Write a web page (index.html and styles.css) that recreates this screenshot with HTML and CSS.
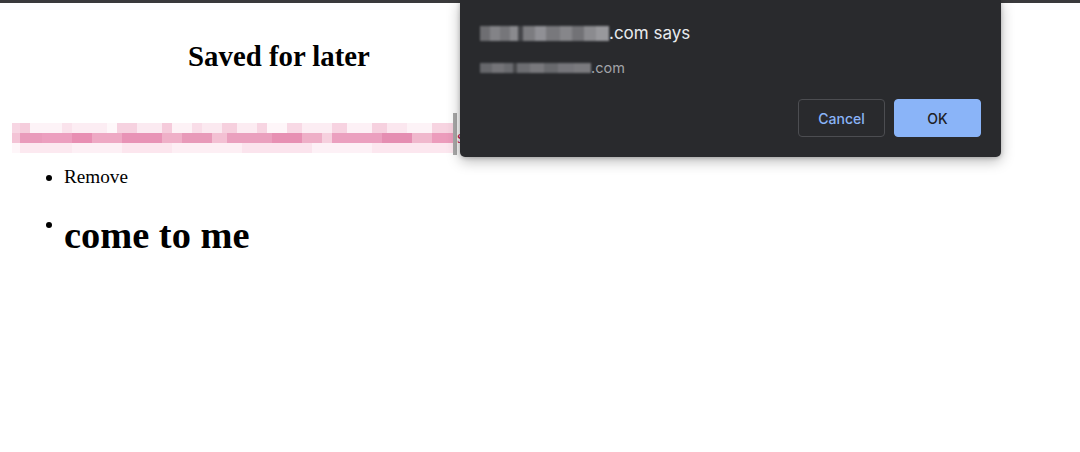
FILE: index.html
```html
<!DOCTYPE html>
<html>
<head>
<meta charset="utf-8">
<link rel="stylesheet" href="styles.css">
</head>
<body>
<div class="topbar"></div>
<main class="page">
  <h2 class="title">Saved for later</h2>
  <div class="linkrow">
    <div class="mosaic" aria-hidden="true">
      <div class="m-row m1"></div>
      <div class="m-row m2"></div>
      <div class="m-row m3"></div>
    </div>
    <div class="caret"></div>
    <span class="tail">s</span>
  </div>
  <ul class="list">
    <li>Remove</li>
    <li class="item-big"><h1 class="big">come to me</h1></li>
  </ul>
</main>

<div class="dialog" role="dialog">
  <div class="d-title"><span class="redact r1" aria-hidden="true"></span>.com says</div>
  <div class="d-msg"><span class="redact r2" aria-hidden="true"></span>.com</div>
  <div class="d-actions">
    <button class="btn btn-cancel">Cancel</button>
    <button class="btn btn-ok">OK</button>
  </div>
</div>
</body>
</html>
```

FILE: styles.css
```css
html, body {
  margin: 0;
  padding: 0;
  background: #ffffff;
}
body {
  font-family: "Liberation Serif", "Times New Roman", serif;
  color: #000;
  width: 1080px;
  height: 452px;
  overflow: hidden;
  position: relative;
}
.topbar {
  height: 3px;
  background: #3a3a3c;
}
.page {
  width: 534px;
  padding-left: 12px;
}
.title {
  margin: 37px 0 0 0;
  font-size: 28.8px;
  font-weight: bold;
  text-align: center;
  line-height: 32px;
}
.linkrow {
  display: flex;
  align-items: flex-start;
  margin-top: 41px;
  height: 42px;
}
.mosaic {
  width: 441px;
  margin-top: 10px;
  display: flex;
  flex-direction: column;
  filter: blur(0.6px);
}
.m-row { height: 10px; }
.m1 {
  background: linear-gradient(90deg,
    #f7d6e3 0 8px, #f5cddc 8px 18px, #fdf3f7 18px 50px, #fae3ec 50px 60px, #fcedf3 60px 95px,
    #fef8fa 95px 105px, #f6d2e0 105px 125px, #fbeaf1 125px 150px, #f5cbdb 150px 160px,
    #fdf2f6 160px 180px, #f9dde8 180px 190px, #fbe9f0 190px 210px, #f6d0de 210px 225px,
    #fcecf2 225px 245px, #f7d5e2 245px 255px, #fef6f9 255px 275px, #f8d9e5 275px 290px,
    #fcedf3 290px 320px, #f7d3e1 320px 335px, #fdf1f6 335px 360px, #f6d1df 360px 375px,
    #fbe7ef 375px 395px, #fdf3f7 395px 420px, #f7d4e1 420px 441px);
}
.m2 {
  background: linear-gradient(90deg,
    #f3c4d6 0 8px, #e99bbb 8px 30px, #ec9fbf 30px 60px, #e88fb3 60px 80px, #eea9c4 80px 110px,
    #e893b6 110px 150px, #efb0c8 150px 170px, #e89ab9 170px 200px, #f3c0d3 200px 215px,
    #eaa0be 215px 260px, #e790b3 260px 290px, #eeafc7 290px 310px, #f6d0de 310px 320px,
    #eba0bf 320px 370px, #e58eb2 370px 400px, #f0b8cd 400px 420px, #ec9cbc 420px 441px);
}
.m3 {
  background: linear-gradient(90deg,
    #fef6f9 0 8px, #fce9f0 8px 60px, #fdf0f5 60px 110px, #fce6ee 110px 160px,
    #fdeff4 160px 230px, #fbe4ed 230px 300px, #fdf1f6 300px 360px, #fce7ef 360px 441px);
}
.caret {
  width: 4px;
  height: 42px;
  background: #a9a9a9;
}
.tail {
  font-size: 19.2px;
  color: #c2185b;
  margin-top: 14px;
  line-height: 20px;
}
.list {
  margin: 11px 0 0 0;
  padding-left: 52px;
  font-size: 19.2px;
}
.item-big {
  margin-top: 25px;
}
.big {
  display: inline-block;
  vertical-align: top;
  font-size: 38.4px;
  font-weight: bold;
  margin: 0;
}

/* Dialog */
.dialog {
  position: absolute;
  left: 460px;
  top: 0;
  width: 541px;
  height: 157px;
  box-sizing: border-box;
  padding: 23px 20px 20px 20px;
  background: #292a2d;
  border-radius: 0 0 5px 5px;
  box-shadow: 0 4px 14px rgba(0, 0, 0, 0.28), 0 1px 4px rgba(0, 0, 0, 0.2);
  font-family: Inter, "Noto Sans", sans-serif;
  display: flex;
  flex-direction: column;
}
.d-title {
  font-size: 17px;
  line-height: 20px;
  color: #e8eaed;
  display: flex;
  align-items: center;
}
.d-msg {
  margin-top: 16px;
  font-size: 14.5px;
  line-height: 18px;
  color: #a2a4a8;
  display: flex;
  align-items: center;
}
.redact {
  display: inline-block;
  filter: blur(1px);
}
.r1 {
  width: 129px;
  height: 15px;
  background: linear-gradient(90deg,
    #6e6e72 0 10px, #838387 10px 20px, #76767a 20px 30px, #8a8a8e 30px 38px, #45464a 38px 43px,
    #7c7c80 43px 55px, #909095 55px 66px, #78787c 66px 80px, #86868a 80px 92px,
    #727276 92px 104px, #8b8b8f 104px 116px, #98989c 116px 129px);
}
.r2 {
  width: 111px;
  height: 10px;
  background: linear-gradient(90deg,
    #66676b 0 12px, #747478 12px 24px, #6a6b6f 24px 33px, #46474a 33px 37px,
    #6c6d71 37px 50px, #78787c 50px 64px, #68696d 64px 78px, #75757a 78px 94px, #7a7a7e 94px 111px);
}
.d-actions {
  margin-top: 22px;
  display: flex;
  justify-content: flex-end;
  gap: 9px;
}
.btn {
  width: 87px;
  height: 38px;
  border-radius: 4px;
  font-family: Inter, "Noto Sans", sans-serif;
  font-size: 14px;
  font-weight: 500;
  cursor: pointer;
}
.btn-cancel {
  background: transparent;
  border: 1px solid #4c4d51;
  color: #8ab4f8;
}
.btn-ok {
  background: #8ab4f8;
  border: 1px solid #8ab4f8;
  color: #202124;
}
```
